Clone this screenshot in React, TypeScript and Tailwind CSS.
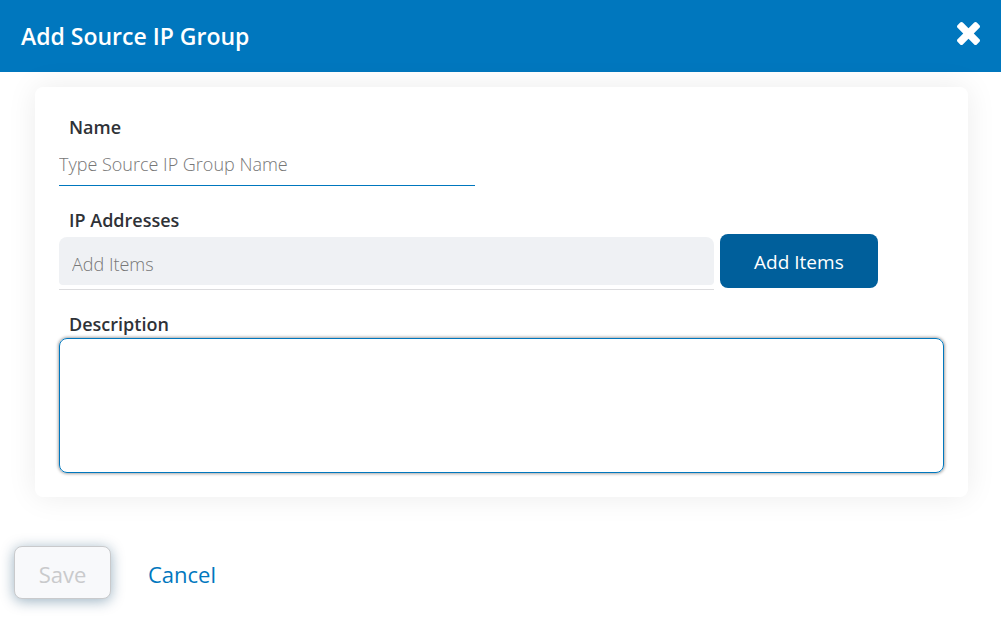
import React from 'react'

function Header() {
  return (
    <header className="flex h-[72px] items-start justify-between bg-[#0077be] px-[21px] pt-5 text-white">
      <h1 className="text-[23px] leading-8 font-semibold">Add Source IP Group</h1>
      <button type="button" aria-label="Close" className="pt-[2px]">
        <svg className="h-[23px] w-[23px]" viewBox="302 366 1188 1188" fill="currentColor">
          <path d="M1490 1322q0 40-28 68l-136 136q-28 28-68 28t-68-28l-294-294-294 294q-28 28-68 28t-68-28l-136-136q-28-28-28-68t28-68l294-294-294-294q-28-28-28-68t28-68l136-136q28-28 68-28t68 28l294 294 294-294q28-28 68-28t68 28l136 136q28 28 28 68t-28 68l-294 294 294 294q28 28 28 68z" />
        </svg>
      </button>
    </header>
  )
}

function GroupForm() {
  return (
    <section className="rounded-lg bg-white px-6 pt-7 pb-6 shadow-[0_0_30px_rgba(0,0,0,0.08)]">

      {/* Name */}
      <div className="w-[47%]">
        <label htmlFor="name" className="block pl-[10px] text-[18px] leading-6 font-semibold text-[#2f3237]">Name</label>
        <input
          id="name"
          type="text"
          placeholder="Type Source IP Group Name"
          className="block h-[47px] w-full border-b border-[#0077be] pt-1 text-[18px] font-light outline-none placeholder:text-[#777]"
        />
      </div>

      {/* IP Addresses */}
      <div className="mt-[22px]">
        <label htmlFor="addresses" className="block pl-[10px] text-[18px] leading-6 font-semibold text-[#2f3237]">IP Addresses</label>
        <div className="flex items-end gap-[6px]">
          <div className="w-[74%] border-b border-[#dcdcde] pt-[5px] pb-1">
            <input
              id="addresses"
              type="text"
              placeholder="Add Items"
              className="block h-12 w-full rounded-t-lg rounded-b-sm bg-[#eff1f4] px-[13px] pt-[6px] text-[18px] font-light outline-none placeholder:text-[#777]"
            />
          </div>
          <button type="button" className="mb-[2px] h-[54px] w-[158px] rounded-lg bg-[#005f9b] pt-[2px] text-[19px] text-white">Add Items</button>
        </div>
      </div>

      {/* Description */}
      <div className="mt-[22px]">
        <label htmlFor="description" className="block pl-[10px] text-[18px] leading-6 font-semibold text-[#2f3237]">Description</label>
        <textarea
          id="description"
          className="mt-[2px] block h-[135px] w-full resize-none rounded-lg border border-[#0077be] p-3 text-[18px] shadow-[0_0_3px_1px_rgba(0,0,0,0.35)] outline-none"
        />
      </div>
    </section>
  )
}

function App() {
  return (
    <div className="min-h-screen bg-white font-['Segoe_UI','Open_Sans',sans-serif]">
      <Header />
      <main className="pt-[15px] pr-[33px] pl-[35px]">
        <GroupForm />
      </main>
      <footer className="mt-[49px] flex items-center gap-[37px] pl-[14px]">
        <button type="button" disabled className="h-[53px] w-[97px] rounded-lg border border-[#c9cacc] bg-[#f8f9fb] pt-1 text-[22px] text-[#c9cacc] shadow-[0_2px_14px_rgba(0,60,100,0.4)]">Save</button>
        <button type="button" className="pt-1 text-[22px] text-[#0077be]">Cancel</button>
      </footer>
    </div>
  )
}

export default App
